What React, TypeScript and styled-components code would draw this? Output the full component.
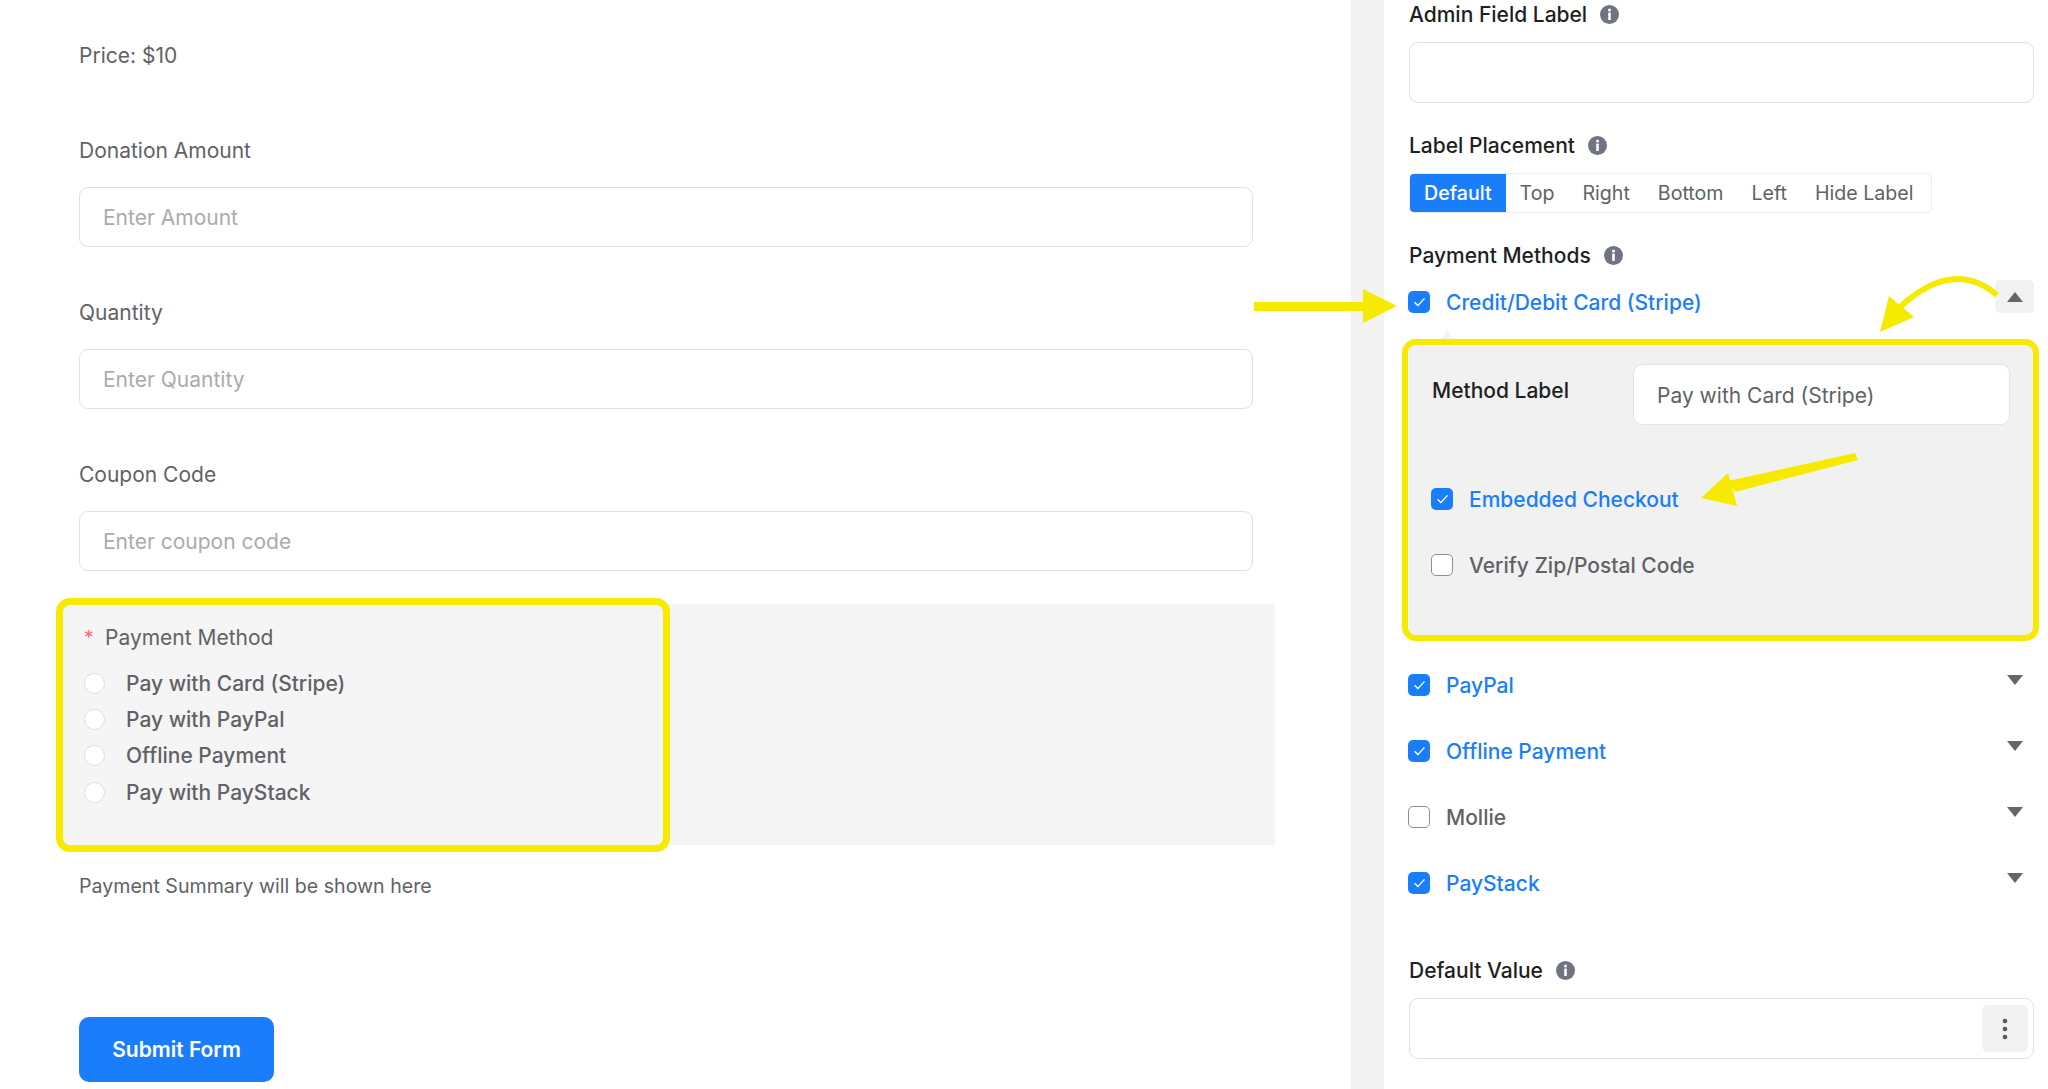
import React from 'react';
import styled, { createGlobalStyle } from 'styled-components';

const BLUE = '#1a7efb';
const YELLOW = '#f5ea00';

const GlobalStyle = createGlobalStyle`
  html, body {
    margin: 0;
    padding: 0;
    background: #fff;
  }
  * {
    box-sizing: border-box;
  }
  body {
    font-family: Inter, "Liberation Sans", sans-serif;
    font-size: 21px;
    color: #606266;
  }
`;

const InfoIcon = () => (
  <InfoSvg viewBox="0 0 19 19">
    <circle cx="9.5" cy="9.5" r="9.5" fill="#6f7480" />
    <circle cx="9.5" cy="5" r="1.5" fill="#fff" />
    <rect x="8.2" y="7.6" width="2.6" height="7.4" rx="0.6" fill="#fff" />
  </InfoSvg>
);

const Check = ({ checked }: { checked?: boolean }) => (
  <CheckBox $checked={checked}>
    {checked && (
      <svg width="13" height="10" viewBox="0 0 13 10" fill="none">
        <path d="M1.5 5.2 4.9 8.6 11.5 1.4" stroke="#fff" strokeWidth="1.4" />
      </svg>
    )}
  </CheckBox>
);

const Arrows = () => (
  <Overlay viewBox="0 0 2048 1089">
    <g fill={YELLOW}>
      <rect x="1254" y="302" width="112" height="9" />
      <path d="M1363 289 1397 306 1363 323Z" />
      <path d="M1889 296 1880 332 1914 317Z" />
      <path d="M1855 453 1858 460 1735 492 1728 481Z" />
      <path d="M1728 473 1701 498 1737 506Z" />
    </g>
    <path d="M1997 295C1970 272 1938 272 1900 307" fill="none" stroke={YELLOW} strokeWidth="6" />
  </Overlay>
);

const placements = ['Default', 'Top', 'Right', 'Bottom', 'Left', 'Hide Label'];
const radios = ['Pay with Card (Stripe)', 'Pay with PayPal', 'Offline Payment', 'Pay with PayStack'];
const methods = [
  { name: 'PayPal', checked: true },
  { name: 'Offline Payment', checked: true },
  { name: 'Mollie', checked: false },
  { name: 'PayStack', checked: true }
];
const fields = [
  { label: 'Donation Amount', placeholder: 'Enter Amount' },
  { label: 'Quantity', placeholder: 'Enter Quantity' },
  { label: 'Coupon Code', placeholder: 'Enter coupon code' }
];

const App = () => {
  return (
    <Page>
      <GlobalStyle />
      <FormColumn>
        <Price>Price: $10</Price>
        {fields.map(field => (
          <Field key={field.label}>
            <FieldLabel>{field.label}</FieldLabel>
            <TextInput placeholder={field.placeholder} />
          </Field>
        ))}
        <PaymentPanel>
          <LeftHighlight />
          <PaymentTitle>
            <Star>*</Star>
            Payment Method
          </PaymentTitle>
          {radios.map(radio => (
            <RadioRow key={radio}>
              <Radio />
              {radio}
            </RadioRow>
          ))}
        </PaymentPanel>
        <Summary>Payment Summary will be shown here</Summary>
        <SubmitButton>Submit Form</SubmitButton>
      </FormColumn>

      <Gutter />

      <SettingsColumn>
        <SettingTitle>
          Admin Field Label
          <InfoIcon />
        </SettingTitle>
        <SettingInput />

        <SettingTitle $spaced>
          Label Placement
          <InfoIcon />
        </SettingTitle>
        <Segmented>
          {placements.map(item => (
            <Segment key={item} $active={item === 'Default'}>{item}</Segment>
          ))}
        </Segmented>

        <SettingTitle $spaced>
          Payment Methods
          <InfoIcon />
        </SettingTitle>
        <MethodRow $first>
          <MethodName $checked>
            <Check checked />
            Credit/Debit Card (Stripe)
          </MethodName>
          <Toggle $filled>
            <Triangle $up />
          </Toggle>
        </MethodRow>

        <MethodPanel>
          <RightHighlight />
          <MethodLabelRow>
            <MethodLabel>Method Label</MethodLabel>
            <MethodInput defaultValue="Pay with Card (Stripe)" />
          </MethodLabelRow>
          <PanelOption $checked $gap={63}>
            <Check checked />
            Embedded Checkout
          </PanelOption>
          <PanelOption $gap={44}>
            <Check />
            Verify Zip/Postal Code
          </PanelOption>
        </MethodPanel>

        {methods.map(method => (
          <MethodRow key={method.name}>
            <MethodName $checked={method.checked}>
              <Check checked={method.checked} />
              {method.name}
            </MethodName>
            <Toggle>
              <Triangle />
            </Toggle>
          </MethodRow>
        ))}

        <SettingTitle $spaced $gapTop={64}>
          Default Value
          <InfoIcon />
        </SettingTitle>
        <ValueBox>
          <KebabButton>
            <svg width="6" height="22" viewBox="0 0 6 22" fill="#55585e">
              <circle cx="3" cy="3" r="2.3" />
              <circle cx="3" cy="11" r="2.3" />
              <circle cx="3" cy="19" r="2.3" />
            </svg>
          </KebabButton>
        </ValueBox>
      </SettingsColumn>

      <Arrows />
    </Page>
  );
};

const Page = styled.div`
  position: relative;
  display: grid;
  grid-template-columns: 1351px 33px 1fr;
  height: 1089px;
  overflow: hidden;
`;

const FormColumn = styled.main`
  padding: 44px 0 0 79px;
`;

const Price = styled.div`
  margin-bottom: 70px;
  line-height: 24px;
`;

const Field = styled.div`
  width: 1174px;
  margin-bottom: 53px;

  &:nth-of-type(4) {
    margin-bottom: 33px;
  }
`;

const FieldLabel = styled.label`
  display: block;
  margin-bottom: 23px;
  line-height: 26px;
`;

const TextInput = styled.input`
  display: block;
  width: 100%;
  height: 60px;
  padding: 0 23px;
  border: 1.5px solid #dfe0e3;
  border-radius: 9px;
  outline: none;
  background: #fff;
  font: inherit;
  color: #606266;

  &::placeholder {
    color: #a9abb0;
    opacity: 1;
  }
`;

const PaymentPanel = styled.section`
  position: relative;
  width: 1212px;
  height: 241px;
  margin-left: -16px;
  padding: 21px 0 0 21px;
  background: #f5f5f5;
`;

const LeftHighlight = styled.div`
  position: absolute;
  left: -7px;
  top: -6px;
  width: 614px;
  height: 254px;
  border: 7px solid ${YELLOW};
  border-radius: 14px;
`;

const PaymentTitle = styled.div`
  display: flex;
  align-items: center;
  height: 24px;
  margin-bottom: 16px;
`;

const Star = styled.span`
  width: 21px;
  color: #f56c6c;
  font-size: 19px;
`;

const RadioRow = styled.div`
  display: flex;
  align-items: center;
  gap: 21px;
  height: 36.3px;
  font-weight: 500;
`;

const Radio = styled.span`
  width: 21px;
  height: 21px;
  border: 1.5px solid #dcdfe6;
  border-radius: 50%;
  background: #fff;
`;

const Summary = styled.div`
  margin: 29px 0 119px;
  line-height: 24px;
  font-size: 19.6px;
`;

const SubmitButton = styled.button`
  display: block;
  width: 195px;
  height: 65px;
  border: none;
  border-radius: 10px;
  background: ${BLUE};
  color: #fff;
  font: inherit;
  font-size: 21px;
  font-weight: 600;
`;

const Gutter = styled.div`
  background: #f2f2f2;
`;

const SettingsColumn = styled.aside`
  padding: 2px 14px 0 25px;
`;

const SettingTitle = styled.div<{ $spaced?: boolean; $gapTop?: number }>`
  display: flex;
  align-items: center;
  gap: 13px;
  height: 24px;
  margin-top: ${p => (p.$gapTop ? p.$gapTop : p.$spaced ? 30 : 0)}px;
  margin-bottom: 16px;
  font-weight: 500;
  color: #1e1f21;
`;

const InfoSvg = styled.svg`
  width: 19px;
  height: 19px;
`;

const SettingInput = styled.input`
  display: block;
  width: 100%;
  height: 61px;
  border: 1.5px solid #dfe0e3;
  border-radius: 9px;
  outline: none;
  background: #fff;
`;

const Segmented = styled.div`
  display: inline-flex;
  width: 523px;
  height: 40px;
  border: 1px solid #ebeef5;
  border-radius: 5px;
  overflow: hidden;
  vertical-align: top;
  font-size: 19.6px;
`;

const Segment = styled.div<{ $active?: boolean }>`
  display: flex;
  align-items: center;
  flex: none;
  padding: 0 14px;
  white-space: nowrap;
  background: ${p => (p.$active ? BLUE : '#fff')};
  color: ${p => (p.$active ? '#fff' : '#606266')};
  font-weight: ${p => (p.$active ? 500 : 400)};
`;

const MethodRow = styled.div<{ $first?: boolean }>`
  display: flex;
  align-items: flex-end;
  justify-content: space-between;
  height: 33px;
  margin-top: ${p => (p.$first ? -3 : 0)}px;
  margin-bottom: 33px;

  &:nth-of-type(n + 9):last-of-type {
    margin-bottom: 0;
  }
`;

const MethodName = styled.div<{ $checked?: boolean }>`
  display: flex;
  align-items: center;
  gap: 16px;
  height: 22px;
  font-weight: 500;
  color: ${p => (p.$checked ? BLUE : '#606266')};
`;

const CheckBox = styled.span<{ $checked?: boolean }>`
  display: flex;
  align-items: center;
  justify-content: center;
  flex: none;
  width: 22px;
  height: 22px;
  margin-left: -1px;
  border: ${p => (p.$checked ? 'none' : '1px solid #8e8e8e')};
  border-radius: 5px;
  background: ${p => (p.$checked ? BLUE : '#fff')};
`;

const Toggle = styled.div<{ $filled?: boolean }>`
  display: flex;
  align-items: center;
  justify-content: center;
  width: 39px;
  height: 33px;
  border-radius: 5px;
  background: ${p => (p.$filled ? '#f2f2f2' : 'transparent')};
`;

const Triangle = styled.span<{ $up?: boolean }>`
  width: 0;
  height: 0;
  border-left: 8.5px solid transparent;
  border-right: 8.5px solid transparent;
  border-top: ${p => (p.$up ? 'none' : '10px solid #666')};
  border-bottom: ${p => (p.$up ? '10px solid #666' : 'none')};
`;

const MethodPanel = styled.section`
  position: relative;
  height: 290px;
  margin: -1px 0 28px;
  padding: 19px 24px 0 23px;
  background: #f1f1f1;

  &::before {
    content: '';
    position: absolute;
    left: 29px;
    top: -14px;
    border-left: 9px solid transparent;
    border-right: 9px solid transparent;
    border-bottom: 14px solid #f3f3f3;
  }
`;

const RightHighlight = styled.div`
  position: absolute;
  left: -7px;
  top: -6px;
  width: 637px;
  height: 302px;
  border: 6px solid ${YELLOW};
  border-radius: 14px;
`;

const MethodLabelRow = styled.div`
  display: grid;
  grid-template-columns: 201px 1fr;
`;

const MethodLabel = styled.div`
  padding-top: 15px;
  line-height: 24px;
  font-weight: 500;
  color: #1e1f21;
`;

const MethodInput = styled.input`
  display: block;
  width: 100%;
  height: 61px;
  margin: 0;
  padding: 2px 23px 0;
  border: 1px solid #e4e5e8;
  border-radius: 9px;
  outline: none;
  background: #fff;
  font: inherit;
  color: #606266;
`;

const PanelOption = styled.div<{ $checked?: boolean; $gap: number }>`
  display: flex;
  align-items: center;
  gap: 16px;
  height: 22px;
  margin-top: ${p => p.$gap}px;
  font-weight: 500;
  color: ${p => (p.$checked ? BLUE : '#606266')};
`;

const ValueBox = styled.div`
  display: flex;
  justify-content: flex-end;
  align-items: center;
  height: 61px;
  padding-right: 5px;
  border: 1.5px solid #dfe0e3;
  border-radius: 9px;
`;

const KebabButton = styled.div`
  display: flex;
  align-items: center;
  justify-content: center;
  width: 46px;
  height: 47px;
  border-radius: 6px;
  background: #f2f2f2;
`;

const Overlay = styled.svg`
  position: absolute;
  left: 0;
  top: 0;
  width: 2048px;
  height: 1089px;
  pointer-events: none;
`;

export default App;
